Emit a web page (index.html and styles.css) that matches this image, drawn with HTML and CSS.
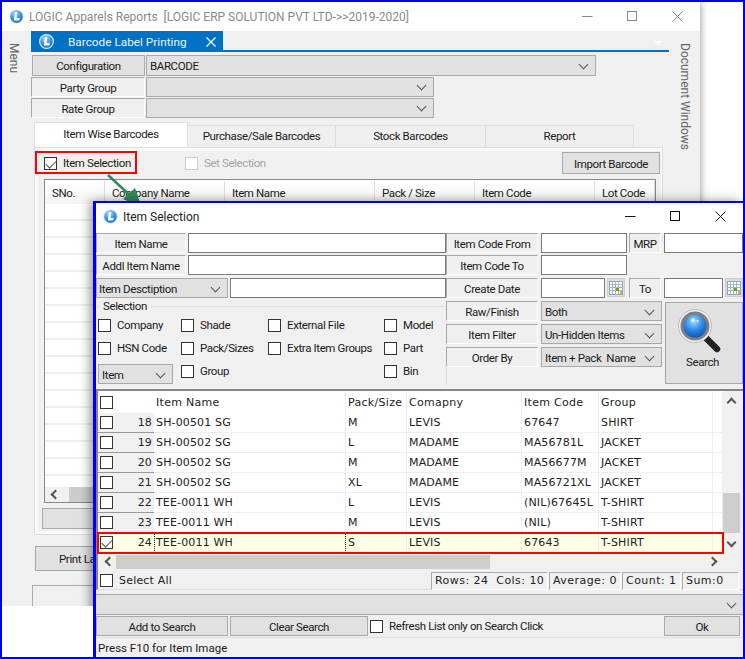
FILE: index.html
```html
<!DOCTYPE html>
<html lang="en">
<head>
<meta charset="utf-8">
<title>Barcode Label Printing</title>
<link rel="stylesheet" href="styles.css">
</head>
<body>
<svg class="defs" width="0" height="0" aria-hidden="true">
  <defs>
    <radialGradient id="orb" cx="40%" cy="25%" r="80%">
      <stop offset="0" stop-color="#a6d8f8"/><stop offset=".55" stop-color="#3a97e4"/><stop offset="1" stop-color="#1269bd"/>
    </radialGradient>
    <symbol id="logo" viewBox="0 0 16 16">
      <circle cx="8" cy="8" r="8" fill="#e4eef6"/>
      <circle cx="8" cy="8" r="6.700" fill="url(#orb)"/>
      <path d="M6.300 3.300h2.500L8.100 9.700h3.300l-.3 2.600H5.200z" fill="#fff"/>
    </symbol>
    <symbol id="cal" viewBox="0 0 14 14">
      <rect x=".5" y=".5" width="13" height="13" fill="#fff" stroke="#8ba7b5"/>
      <path d="M.5 3.500h13M.5 6.500h13M.5 9.500h13M3.500.5v13M6.500.5v13M9.500.5v13" stroke="#9db8c4" fill="none"/>
      <rect x="7" y="7" width="3" height="3" fill="#6aa51c"/>
      <rect x="11" y="10" width="2" height="3" fill="#e0a93a"/>
    </symbol>
  </defs>
</svg>

<div class="desktop">

  <section class="win back">
    <header class="titlebar">
      <svg class="logo"><use href="#logo"/></svg>
      <span class="title-text">LOGIC Apparels Reports&nbsp; [LOGIC ERP SOLUTION PVT LTD-&gt;&gt;2019-2020]</span>
      <span class="ctrls ctrls-dim">
        <svg width="11" height="11" viewBox="0 0 11 11"><path d="M0 5.500h10.500" stroke="currentColor"/></svg>
        <svg width="11" height="11" viewBox="0 0 11 11"><rect x=".5" y=".5" width="9" height="9" fill="none" stroke="currentColor"/></svg>
        <svg width="11" height="11" viewBox="0 0 11 11"><path d="M.5.500l10 10M10.500.500l-10 10" stroke="currentColor" fill="none"/></svg>
      </span>
    </header>
    <div class="back-body">
      <aside class="side side-left"><span class="side-text">Menu</span></aside>
      <div class="back-main">
        <div class="tabstrip">
          <div class="doc-tab">
            <svg class="logo"><use href="#logo"/></svg>
            <span class="doc-tab-text">Barcode Label Printing</span>
            <svg class="doc-x" width="10" height="10" viewBox="0 0 10 10"><path d="M.5.500l9 9M9.500.500l-9 9" stroke="#fff" stroke-width="1.300" fill="none"/></svg>
          </div>
          <span class="tab-menu"></span>
        </div>

        <div class="cfg-row first">
          <div class="lbl lbl-dark cfg-lbl">Configuration</div>
          <div class="combo cfg-wide"><span>BARCODE</span></div>
        </div>
        <div class="cfg-row">
          <div class="lbl cfg-lbl">Party Group</div>
          <div class="combo cfg-narrow"><span></span></div>
        </div>
        <div class="cfg-row">
          <div class="lbl cfg-lbl">Rate Group</div>
          <div class="combo cfg-narrow"><span></span></div>
        </div>

        <div class="tabs">
          <div class="tab active">Item Wise Barcodes</div>
          <div class="tab t2">Purchase/Sale Barcodes</div>
          <div class="tab t3">Stock Barcodes</div>
          <div class="tab t4">Report</div>
        </div>
        <div class="panel">
          <div class="panel-in">
            <div class="toolbar">
              <span class="cb on"></span><span class="cb-text">Item Selection</span>
              <span class="cb dim set-cb"></span><span class="cb-text dim-text">Set Selection</span>
              <button class="btn import">Import Barcode</button>
            </div>
            <div class="bgrid">
              <div class="bgrid-head">
                <div class="c1">SNo.</div><div class="c2">Company Name</div><div class="c3">Item Name</div>
                <div class="c4">Pack / Size</div><div class="c5">Item Code</div><div class="c6">Lot Code</div>
              </div>
              <div class="bgrid-rows"></div>
              <div class="hscroll"><span class="arrow left"></span></div>
            </div>
            <div class="btn panel-btn"></div>
          </div>
        </div>
        <div class="btn print">Print Label</div>
        <div class="bottom-box"></div>
      </div>
      <aside class="side side-right"><span class="side-text">Document Windows</span></aside>
    </div>
  </section>

  <div class="callout"></div>
  <svg class="pointer" width="40" height="36" viewBox="0 0 40 36"><path d="M2 1L29 26" stroke="#2e8b57" stroke-width="2.500"/><path d="M17 25L36 34 29 14z" fill="#2e8b57"/></svg>
  <div class="patch"></div>

  <section class="win front">
    <header class="titlebar front-title">
      <svg class="logo"><use href="#logo"/></svg>
      <span class="title-text dark">Item Selection</span>
      <span class="ctrls">
        <svg width="11" height="11" viewBox="0 0 11 11"><path d="M0 5.500h10.500" stroke="currentColor"/></svg>
        <svg width="11" height="11" viewBox="0 0 11 11"><rect x=".5" y=".5" width="9" height="9" fill="none" stroke="currentColor"/></svg>
        <svg width="11" height="11" viewBox="0 0 11 11"><path d="M.5.500l10 10M10.500.500l-10 10" stroke="currentColor" fill="none"/></svg>
      </span>
    </header>

    <div class="form-top">
      <div class="lbl m2">Item Name</div><div class="input"></div>
      <div class="lbl m3">Item Code From</div><div class="input m2"></div>
      <div class="lbl m3">MRP</div><div class="input"></div>

      <div class="lbl m2">Addl Item Name</div><div class="input"></div>
      <div class="lbl m3">Item Code To</div><div class="input m2"></div>
      <div></div><div></div>

      <div class="desc-cell">
        <div class="combo desc-combo"><span>Item Desctiption</span></div>
        <div class="input grow"></div>
      </div>
      <div class="lbl m3">Create Date</div>
      <div class="date-cell m4"><div class="input grow"></div><div class="cal"><svg width="14" height="14"><use href="#cal"/></svg></div></div>
      <div class="lbl m3">To</div>
      <div class="date-cell"><div class="input grow"></div><div class="cal"><svg width="14" height="14"><use href="#cal"/></svg></div></div>
    </div>

    <div class="form-low">
      <fieldset class="sel">
        <legend>Selection</legend>
        <div class="sel-grid">
          <label class="opt"><span class="cb"></span>Company</label>
          <label class="opt"><span class="cb"></span>Shade</label>
          <label class="opt"><span class="cb"></span>External File</label>
          <label class="opt"><span class="cb"></span>Model</label>
          <label class="opt"><span class="cb"></span>HSN Code</label>
          <label class="opt"><span class="cb"></span>Pack/Sizes</label>
          <label class="opt"><span class="cb"></span>Extra Item Groups</label>
          <label class="opt"><span class="cb"></span>Part</label>
          <div class="combo item-combo"><span>Item</span></div>
          <label class="opt"><span class="cb"></span>Group</label>
          <div></div>
          <label class="opt"><span class="cb"></span>Bin</label>
        </div>
      </fieldset>
      <div class="filters">
        <div class="lbl">Raw/Finish</div><div class="combo"><span>Both</span></div>
        <div class="lbl">Item Filter</div><div class="combo"><span>Un-Hidden Items</span></div>
        <div class="lbl">Order By</div><div class="combo"><span>Item + Pack&nbsp; Name</span></div>
      </div>
      <button class="search">
        <svg width="44" height="48" viewBox="0 0 44 48">
          <defs><radialGradient id="lens" cx="45%" cy="30%" r="75%"><stop offset="0" stop-color="#a9dcff"/><stop offset=".5" stop-color="#2f8be6"/><stop offset="1" stop-color="#0b4fb8"/></radialGradient></defs>
          <path d="M29 30L40 41" stroke="#222" stroke-width="6.500" stroke-linecap="round"/>
          <circle cx="18" cy="18" r="16.500" fill="#f2f2f2" stroke="#bbb"/>
          <circle cx="18" cy="18" r="14.500" fill="#7f7f7f"/>
          <circle cx="18" cy="18" r="11.500" fill="url(#lens)"/>
          <circle cx="16" cy="12" r="2" fill="#e8f6ff"/><circle cx="20.500" cy="13" r="1" fill="#e8f6ff"/>
        </svg>
        <span>Search</span>
      </button>
    </div>

    <div class="list">
      <div class="list-main">
        <div class="rows">
          <div class="row head">
            <div class="rh plain"><span class="cb"></span></div>
            <div>Item Name</div><div>Pack/Size</div><div>Comapny</div><div>Item Code</div><div>Group</div><div></div>
          </div>
          <div class="row"><div class="rh"><span class="cb"></span><b>18</b></div><div>SH-00501 SG</div><div>M</div><div>LEVIS</div><div>67647</div><div>SHIRT</div><div></div></div>
          <div class="row"><div class="rh"><span class="cb"></span><b>19</b></div><div>SH-00502 SG</div><div>L</div><div>MADAME</div><div>MA56781L</div><div>JACKET</div><div></div></div>
          <div class="row"><div class="rh"><span class="cb"></span><b>20</b></div><div>SH-00502 SG</div><div>M</div><div>MADAME</div><div>MA56677M</div><div>JACKET</div><div></div></div>
          <div class="row"><div class="rh"><span class="cb"></span><b>21</b></div><div>SH-00502 SG</div><div>XL</div><div>MADAME</div><div>MA56721XL</div><div>JACKET</div><div></div></div>
          <div class="row"><div class="rh"><span class="cb"></span><b>22</b></div><div>TEE-0011 WH</div><div>L</div><div>LEVIS</div><div>(NIL)67645L</div><div>T-SHIRT</div><div></div></div>
          <div class="row"><div class="rh"><span class="cb"></span><b>23</b></div><div>TEE-0011 WH</div><div>M</div><div>LEVIS</div><div>(NIL)</div><div>T-SHIRT</div><div></div></div>
          <div class="row current"><div class="rh"><span class="cb on"></span><b>24</b></div><div class="focus">TEE-0011 WH</div><div>S</div><div>LEVIS</div><div>67643</div><div>T-SHIRT</div><div></div></div>
        </div>
        <div class="vscroll">
          <span class="arrow up"></span>
          <span class="vthumb"></span>
          <span class="arrow down"></span>
        </div>
      </div>
      <div class="hscroll front-h">
        <span class="arrow left"></span>
        <span class="hthumb"></span>
        <span class="arrow right"></span>
      </div>
      <div class="summary">
        <span class="cb"></span><span class="sel-all">Select All</span>
        <div class="stats">
          <span class="s1">Rows: 24&nbsp; Cols: 10</span>
          <span class="s2">Average: 0</span>
          <span class="s3">Count: 1</span>
          <span class="s4">Sum:0</span>
        </div>
      </div>
    </div>

    <div class="combo dropbar"><span></span></div>

    <div class="actions">
      <div class="btn add">Add to Search</div>
      <div class="btn clear">Clear Search</div>
      <span class="cb refresh-cb"></span><span class="cb-text">Refresh List only on Search Click</span>
      <div class="btn ok">Ok</div>
    </div>
    <footer class="status">Press F10 for Item Image</footer>
  </section>
</div>
</body>
</html>
```
FILE: styles.css
```css
* { box-sizing: border-box; }
html, body { margin: 0; padding: 0; }
body { font-family: Roboto, "Liberation Sans", sans-serif; font-size: 11.5px; letter-spacing: -.38px; color: #1a1a1a; background: #fff; }
.defs { position: absolute; }
.desktop { position: relative; width: 745px; height: 659px; border: 2px solid #0000f0; overflow: hidden; background: #fff; }

.win { position: absolute; display: flex; flex-direction: column; background: #f0f0f0; }
.back { left: 0; top: 0; width: 698px; height: 655px; box-shadow: 0 0 8px rgba(0,0,0,.45); }
.front { left: 91px; top: 199px; right: 0; bottom: 0; border-left: 3px solid #0000f0; border-top: 2px solid #0000f0; box-shadow: -3px 0 10px rgba(0,0,0,.4); }

.titlebar { display: flex; align-items: center; height: 29px; padding-left: 7px; background: #fff; flex: none; }
.logo { width: 15px; height: 15px; flex: none; }
.title-text { margin-left: 5px; font-size: 12px; letter-spacing: 0; color: #8a8a8a; white-space: nowrap; }
.title-text.dark { color: #222; margin-left: 5px; }
.ctrls { margin-left: auto; display: flex; gap: 34px; padding-right: 17px; color: #111; }
.ctrls-dim { color: #888; padding-right: 17px; }

.back-body { flex: 1; display: flex; min-height: 0; }
.side { flex: none; padding-top: 12px; display: flex; justify-content: center; }
.side-left { width: 29px; padding-right: 5px; }
.side-right { width: 31px; padding-left: 1px; }
.side-text { writing-mode: vertical-rl; color: #666; font-size: 12px; letter-spacing: 0; }
.back-main { flex: 1; min-width: 0; }

.tabstrip { height: 21px; border-bottom: 2px solid #0072c6; display: flex; width: 638px; }
.doc-tab { width: 192px; height: 21px; background: #0072c6; display: flex; align-items: center; padding-left: 8px; color: #fff; }
.doc-tab-text { margin-left: 14px; font-size: 11.800px; letter-spacing: 0; color: #eaf4fc; }
.doc-x { margin-left: auto; margin-right: 7px; }
.tab-menu { margin-left: auto; margin-right: 7px; margin-top: 10px; width: 0; height: 0; border: 4px solid transparent; border-top: 4px solid #fff; border-bottom: 0; }

.lbl { display: flex; align-items: center; justify-content: center; height: 20px; padding-top: 1px; background: #efefef; border-top: 1px solid #a8a8a8; border-left: 1px solid #a8a8a8; border-right: 1px solid #fff; border-bottom: 1px solid #fff; white-space: nowrap; }
.lbl-dark { background: #e1e1e1; border: 1px solid #a8a8a8; padding-top: 0; }
.combo { display: flex; align-items: center; justify-content: space-between; height: 20px; background: #e1e1e1; border: 1px solid #a8a8a8; padding: 0 8px 0 3px; white-space: nowrap; }
.combo::after { content: ""; width: 6px; height: 6px; margin-top: -3px; border-right: 1px solid #555; border-bottom: 1px solid #555; transform: rotate(45deg); flex: none; }
.front .combo { padding-top: 1px; }

.cfg-row { display: flex; gap: 1px; margin-top: 1px; height: 20px; }
.cfg-row.first { margin-top: 3px; height: 21px; padding-left: 1px; }
.cfg-row.first .lbl, .cfg-row.first .combo { height: 21px; }
.cfg-lbl { width: 114px; }
.first .cfg-lbl { width: 113px; }
.cfg-wide { width: 450px; }
.cfg-narrow { width: 288px; }

.tabs { display: flex; margin-top: 4px; margin-left: 3px; height: 25px; align-items: flex-end; }
.tab { height: 22px; display: flex; align-items: center; justify-content: center; padding-bottom: 1px; background: #efefef; border: 1px solid #ddd; border-bottom: 0; margin-left: -1px; }
.tab.active { width: 154px; height: 25px; background: #fff; margin-left: 0; padding-bottom: 3px; }
.t2 { width: 149px; } .t3 { width: 151px; } .t4 { width: 149px; }

.panel { margin-left: 3px; width: 629px; height: 388px; border: 1px solid #ddd; }
.panel-in { height: 100%; border: 3px solid #fafafa; border-right-width: 1px; padding-top: 1px; }
.toolbar { display: flex; align-items: center; height: 22px; padding-left: 6px; }
.cb { display: inline-block; position: relative; flex: none; width: 13px; height: 13px; background: #fff; border: 1px solid #333; }
.cb.on::after { content: ""; position: absolute; left: 3px; top: 0; width: 5px; height: 9px; border-right: 1.500px solid #555; border-bottom: 1.500px solid #555; transform: rotate(45deg); }
.cb.dim { border-color: #ccc; }
.cb-text { margin-left: 6px; white-space: nowrap; }
.dim-text { color: #a5a5a5; }
.set-cb { margin-left: 54px; }
.btn { display: flex; align-items: center; justify-content: center; padding-top: 1px; background: #e1e1e1; border: 1px solid #a8a8a8; font: inherit; letter-spacing: inherit; color: inherit; white-space: nowrap; }
.import { margin-left: auto; margin-right: 1px; width: 98px; height: 22px; padding: 1px 0 0; }

.bgrid { margin: 5px 0 0 6px; width: 612px; height: 324px; border: 1px solid #888; display: flex; flex-direction: column; background: #fff; }
.bgrid-head { display: grid; grid-template-columns: 60px 120px 150px 100px 120px 1fr; height: 24px; padding-top: 1px; background: linear-gradient(#fff, #f4f4f4); flex: none; }
.bgrid-head div { display: flex; align-items: center; padding-left: 7px; border-right: 1px solid #ddd; }
.bgrid-rows { flex: 1; background: repeating-linear-gradient(#fff 0 15px, #eee 15px 17px); }
.hscroll { display: flex; align-items: center; flex: none; height: 15px; background: #f0f0f0; }
.bgrid .hscroll::after { content: ""; flex: 1; height: 15px; margin-left: 10px; background: #cdcdcd; }
.bgrid .arrow.left { margin-left: 7px; }
.arrow { flex: none; width: 7px; height: 7px; border-left: 2px solid #555; border-top: 2px solid #555; }
.arrow.left { transform: rotate(-45deg); }
.arrow.right { transform: rotate(135deg); }
.arrow.up { transform: rotate(45deg); }
.arrow.down { transform: rotate(225deg); }
.panel-btn { margin: 5px 0 0 4px; width: 600px; height: 21px; }
.print { margin: 11px 0 0 4px; width: 120px; height: 25px; justify-content: flex-start; padding: 0 0 0 23px; }
.bottom-box { margin: 14px 0 0 1px; width: 300px; height: 40px; border: 1px solid #aaa; border-bottom: 0; }

.callout { position: absolute; left: 33px; top: 149px; width: 102px; height: 23px; border: 2px solid #f00; }
.pointer { position: absolute; left: 104px; top: 172px; }
.patch { position: absolute; left: -1px; top: 604px; width: 92px; height: 52px; background: #fff; z-index: 2; }

.front-title { padding-left: 7px; height: 30px; padding-bottom: 3px; }
.form-top { display: grid; grid-template-columns: 92px 258px 95px 88px 35px 79px; grid-template-rows: 22px 23px 23px; flex: none; }
.m2 { margin-right: 2px; }
.m3 { margin-right: 3px; }
.m4 { margin-right: 4px; }
.input { height: 20px; background: #fff; border: 1px solid #7a7a7a; }
.grow { flex: 1; min-width: 0; }
.desc-cell { grid-column: 1 / 3; display: flex; gap: 2px; }
.desc-combo { width: 132px; padding-left: 2px; }
.date-cell { display: flex; gap: 2px; }
.cal { width: 18px; height: 19px; flex: none; display: flex; align-items: center; justify-content: center; background: #ddd; border: 1px solid #ccc; }

.form-low { display: flex; flex: none; height: 88px; }
.sel { margin: 0; padding: 0 0 0 2px; width: 351px; height: 84px; border: 0; border-top: 1px solid #ddd; border-right: 1px solid #ddd; min-width: 0; }
.sel legend { padding: 0 3px; margin-left: 2px; line-height: 11px; }
.sel-grid { display: grid; grid-template-columns: 83px 87px 116px 1fr; grid-auto-rows: 23px; margin-top: 6px; }
.opt { display: flex; align-items: center; white-space: nowrap; height: 14px; }
.opt .cb { margin-right: 6px; }
.item-combo { width: 75px; padding-left: 3px; }
.filters { display: grid; grid-template-columns: 92px 121px; column-gap: 3px; grid-auto-rows: 23px; width: 219px; margin-left: -1px; }
.search { display: flex; flex-direction: column; align-items: center; width: 78px; height: 82px; margin-top: 1px; padding: 5px 0 0; background: #e1e1e1; border: 1px solid #a8a8a8; font: inherit; letter-spacing: inherit; color: inherit; }
.search svg { margin-left: -10px; }
.search span { margin: -1px 0 0 -3px; }

.list { flex: none; height: 201px; border-top: 2px solid #858585; border-left: 2px solid #858585; border-bottom: 1px solid #ddd; font-family: "DejaVu Sans", sans-serif; font-size: 11px; letter-spacing: 0; color: #222; }
.list-main { display: flex; height: 163px; }
.rows { width: 625px; flex: none; background: #fff; padding-top: 1px; letter-spacing: .15px; }
.row { display: grid; grid-template-columns: 56px 192px 61px 115px 77px 114px 10px; height: 20px; background: #fff; }
.row > div { display: flex; align-items: center; padding-left: 2px; border-right: 1px solid #eee; border-bottom: 1px solid #eee; white-space: nowrap; overflow: hidden; }
.row .rh { background: #f0f0f0; padding: 0 2px; border-right: 0; border-bottom: 1px solid #999; justify-content: space-between; }
.row .rh.plain { background: #fff; border-bottom: 0; }
.rh b { font-weight: 400; }
.row.head { height: 21px; letter-spacing: .3px; }
.row.head > div { border-bottom: 0; }
.row.current { position: relative; outline: 2px solid #f00; outline-offset: -1px; z-index: 1; }
.row.current > div { background: #ffffe6; border-bottom-color: #ffffe6; }
.row.current .focus { outline: 1px dotted #222; outline-offset: -1px; }
.vscroll { flex: 1; display: flex; flex-direction: column; align-items: center; background: #f0f0f0; margin-right: 3px; padding-top: 8px; }
.vthumb { width: 17px; height: 40px; margin-top: 87px; background: #cdcdcd; }
.vscroll .arrow.down { margin-top: 6px; }
.front-h { margin-right: 3px; padding-left: 8px; }
.hthumb { width: 374px; height: 14px; margin-left: 3px; background: #cdcdcd; }
.front-h .arrow.right { margin-left: auto; margin-right: 24px; }
.summary { display: flex; align-items: center; height: 21px; padding: 2px 0 0 2px; }
.sel-all { margin-left: 6px; letter-spacing: .2px; }
.stats { margin-left: auto; margin-right: 4px; display: flex; height: 18px; gap: 1px; letter-spacing: .45px; }
.stats span { display: flex; align-items: center; padding-left: 3px; border-top: 1px solid #aaa; border-left: 1px solid #aaa; border-bottom: 1px solid #fff; border-right: 1px solid #fff; white-space: nowrap; }
.s1 { width: 117px; } .s2 { width: 72px; } .s3 { width: 59px; } .s4 { width: 57px; }

.dropbar { flex: none; height: 21px; margin-top: 4px; border-left: 0; border-right: 0; }
.actions { display: flex; align-items: center; flex: none; height: 22px; }
.add { width: 132px; height: 20px; }
.clear { width: 138px; height: 20px; margin-left: 2px; }
.refresh-cb { margin-left: 2px; }
.ok { width: 76px; height: 20px; margin-left: auto; margin-right: 3px; }
.status { flex: 1; display: flex; align-items: center; padding-left: 2px; padding-top: 1px; letter-spacing: 0; border-top: 1px solid #ddd; }
```
